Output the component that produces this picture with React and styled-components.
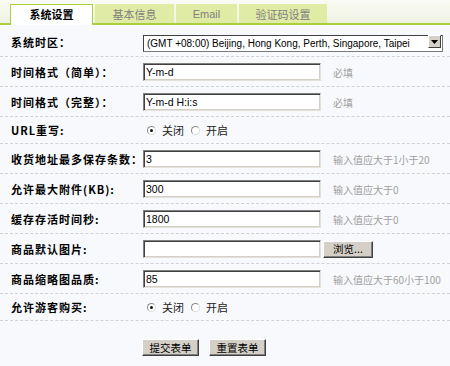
import React from "react";
import styled, {createGlobalStyle} from "styled-components";

const GlobalStyle = createGlobalStyle`
  html, body {
    margin: 0;
    padding: 0;
    background: #f8f9fc;
  }
  body {
    font-family: "Liberation Sans", "Noto Sans CJK SC", sans-serif;
  }
`;

const tabs = ["系统设置", "基本信息", "Email", "验证码设置"];
const tabWidths = [83, 79, 61, 88];

const fields = [
    {label: "时间格式（简单）：", type: "text", value: "Y-m-d", hint: "必填"},
    {label: "时间格式（完整）：", type: "text", value: "Y-m-d H:i:s", hint: "必填"},
    {label: "URL重写:", type: "radio", name: "rewrite"},
    {label: "收货地址最多保存条数：", type: "text", value: "3", hint: "输入值应大于1小于20"},
    {label: "允许最大附件(KB):", type: "text", value: "300", hint: "输入值应大于0"},
    {label: "缓存存活时间秒:", type: "text", value: "1800", hint: "输入值应大于0"},
    {label: "商品默认图片:", type: "file"},
    {label: "商品缩略图品质:", type: "text", value: "85", hint: "输入值应大于60小于100"},
    {label: "允许游客购买:", type: "radio", name: "guest"},
];

function App() {
    return (
        <Page>
            <GlobalStyle/>
            <TabBar>
                {tabs.map((t, i) => (
                    <Tab key={t} $active={i === 0} $w={tabWidths[i]}>{t}</Tab>
                ))}
            </TabBar>

            <Row $first>
                <Label>系统时区：</Label>
                <SelectWrap>
                    <Select defaultValue="8">
                        <option value="8">(GMT +08:00) Beijing, Hong Kong, Perth, Singapore, Taipei</option>
                    </Select>
                    <SelectArrow>
                        <svg width="7" height="4" viewBox="0 0 7 4">
                            <path d="M0 0h7L3.5 4z" fill="#000"/>
                        </svg>
                    </SelectArrow>
                </SelectWrap>
            </Row>

            {fields.map((f) => (
                <Row key={f.label} $radio={f.type === "radio"}>
                    <Label>{f.label}</Label>
                    <Cell>
                        {f.type === "text" && (
                            <>
                                <TextInput type="text" defaultValue={f.value}/>
                                {f.hint && <Hint>{f.hint}</Hint>}
                            </>
                        )}
                        {f.type === "file" && (
                            <>
                                <TextInput type="text" defaultValue=""/>
                                <Button $w={50} type="button" $browse>浏览...</Button>
                            </>
                        )}
                        {f.type === "radio" && (
                            <>
                                <Radio type="radio" name={f.name} defaultChecked/>
                                <RadioText>关闭</RadioText>
                                <Radio type="radio" name={f.name}/>
                                <RadioText>开启</RadioText>
                            </>
                        )}
                    </Cell>
                </Row>
            ))}

            <Actions>
                <Button $w={57} type="submit">提交表单</Button>
                <Button $w={57} type="reset">重置表单</Button>
            </Actions>
        </Page>
    );
}

const Page = styled.div`
  width: 450px;
  min-height: 366px;
  background: #f8f9fc;
`;

const TabBar = styled.div`
  display: flex;
  align-items: flex-end;
  gap: 2px;
  height: 23px;
  padding-left: 10px;
  background: linear-gradient(to bottom, #fafbf5, #eef2e0);
  border-bottom: 2px solid #abcf3e;
`;

const Tab = styled.div`
  box-sizing: border-box;
  width: ${p => p.$w}px;
  height: ${p => p.$active ? 21 : 19}px;
  margin-bottom: ${p => p.$active ? -2 : 0}px;
  display: flex;
  align-items: center;
  justify-content: center;
  padding-bottom: ${p => p.$active ? 2 : 0}px;
  font-family: ${p => p.$active ? `"Noto Sans CJK SC", sans-serif` : `"Liberation Sans", "Noto Sans CJK SC", sans-serif`};
  font-size: 11px;
  font-weight: ${p => p.$active ? 700 : 400};
  color: ${p => p.$active ? "#000" : "#808080"};
  background: ${p => p.$active ? "#fff" : "#e0eba6"};
  border: ${p => p.$active ? "1px solid #abcf3e" : "none"};
  border-bottom: none;
`;

const Row = styled.div`
  display: grid;
  grid-template-columns: 143px 1fr;
  align-items: center;
  padding: ${p => p.$first ? "8px 0 6px" : p.$radio ? "6px 0" : "6px 0 5px"};
  border-bottom: 1px dashed #cfd2d8;
  height: ${p => p.$radio ? 14 : p.$first ? 17 : 18}px;
`;

const Label = styled.div`
  padding-left: 11px;
  font-family: "Noto Sans CJK SC", sans-serif;
  font-size: 11px;
  font-weight: 700;
  letter-spacing: 1px;
  color: #000;
  white-space: nowrap;
  line-height: 14px;
`;

const Cell = styled.div`
  display: flex;
  align-items: center;
  height: 100%;
`;

const SelectWrap = styled.div`
  position: relative;
  width: 300px;
  height: 17px;
`;

const Select = styled.select`
  appearance: none;
  box-sizing: border-box;
  width: 100%;
  height: 17px;
  margin: 0;
  padding: 0 0 0 3px;
  border: 1px solid #7a7a7a;
  border-top-color: #404040;
  border-left-color: #404040;
  background: #fff;
  font-family: "Liberation Sans", sans-serif;
  font-size: 10px;
  color: #000;
  outline: none;
`;

const SelectArrow = styled.span`
  position: absolute;
  right: 2px;
  top: 2px;
  box-sizing: border-box;
  width: 13px;
  height: 13px;
  display: flex;
  align-items: center;
  justify-content: center;
  background: #d4d0c8;
  border: 1px solid;
  border-color: #fff #404040 #404040 #fff;
  pointer-events: none;
`;

const TextInput = styled.input`
  box-sizing: border-box;
  width: 178px;
  height: 18px;
  margin: 0;
  padding: 0 2px;
  background: #fff;
  border: 1px solid;
  border-color: #808080 #e4e1da #e4e1da #808080;
  box-shadow: inset 1px 1px 0 #404040, inset -1px -1px 0 #d4d0c8;
  font-family: "Liberation Sans", sans-serif;
  font-size: 10.5px;
  color: #000;
  outline: none;
`;

const Hint = styled.span`
  margin-left: 12px;
  font-family: "Noto Sans CJK SC", sans-serif;
  font-size: 10px;
  color: #a0a0a0;
  white-space: nowrap;
`;

const Radio = styled.input`
  appearance: none;
  box-sizing: border-box;
  width: 9px;
  height: 9px;
  margin: 0 6px 0 4px;
  border-radius: 50%;
  border: 1px solid #8a8a8a;
  border-bottom-color: #ddd;
  border-right-color: #ddd;
  background: #fff;
  display: grid;
  place-items: center;

  &:checked::after {
    content: "";
    width: 3px;
    height: 3px;
    border-radius: 50%;
    background: #111;
  }
`;

const RadioText = styled.span`
  margin-right: 3px;
  font-family: "Noto Sans CJK SC", sans-serif;
  font-size: 11px;
  line-height: 14px;
  color: #222;
`;

const Button = styled.button`
  box-sizing: border-box;
  width: ${p => p.$w}px;
  height: 17px;
  margin: 0 0 0 ${p => p.$browse ? 2 : 0}px;
  padding: 0;
  background: #d4d0c8;
  border: 1px solid;
  border-color: #fff #404040 #404040 #fff;
  box-shadow: inset -1px -1px 0 #808080;
  font-family: "Noto Sans CJK SC", sans-serif;
  font-size: 10.5px;
  line-height: 14px;
  color: #000;
`;

const Actions = styled.div`
  display: flex;
  gap: 10px;
  padding: 18px 0 0 142px;
`;

export default App;
